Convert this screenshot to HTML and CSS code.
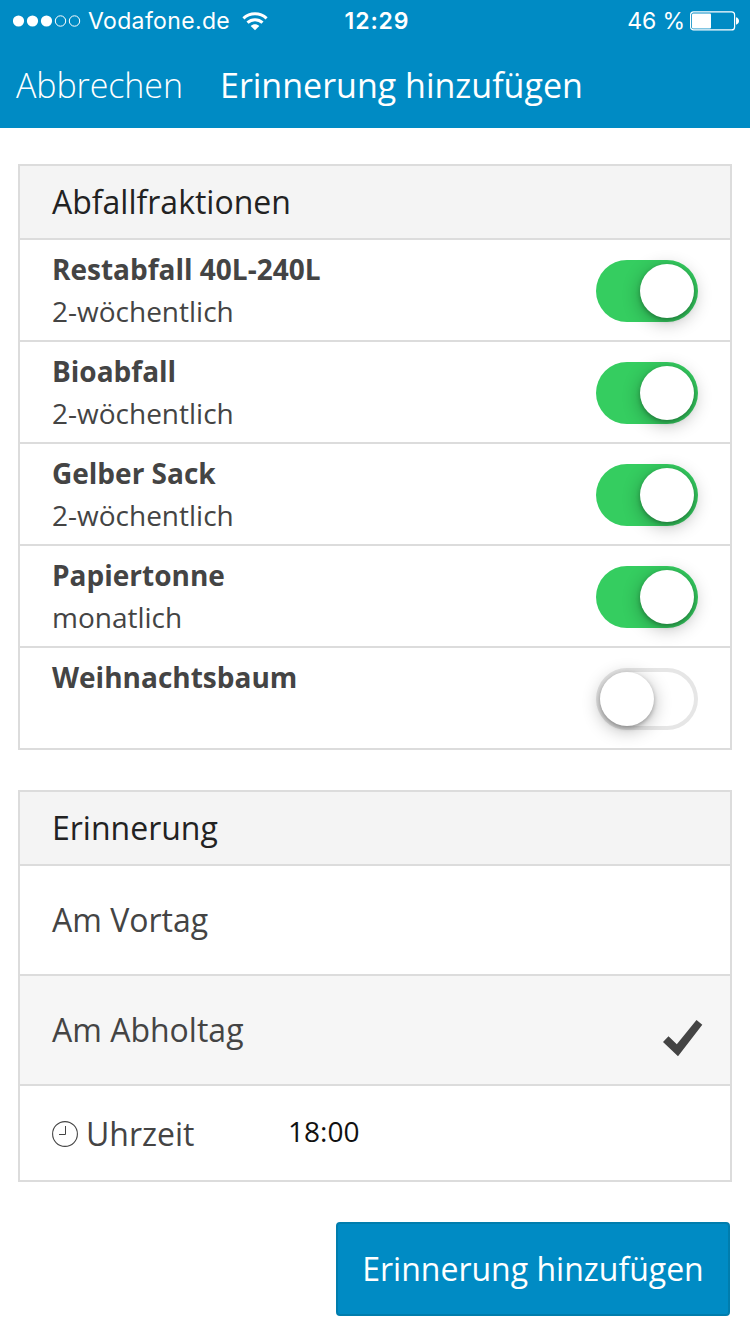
FILE: index.html
```html
<!DOCTYPE html>
<html lang="de">
<head>
  <meta charset="UTF-8">
  <meta name="viewport" content="width=device-width, initial-scale=1.0">
  <title>Erinnerung hinzufügen</title>
  <link rel="stylesheet" href="styles.css">
</head>
<body>
  <header>
    <div class="status-bar">
      <div class="status-left">
        <svg class="signal" width="68" height="12" viewBox="0 0 68 12">
          <g fill="#fff">
            <circle cx="5.5" cy="6" r="5.6"/>
            <circle cx="19.5" cy="6" r="5.6"/>
            <circle cx="33.5" cy="6" r="5.6"/>
          </g>
          <g fill="none" stroke="#fff">
            <circle cx="47.5" cy="6" r="5.2"/>
            <circle cx="61.5" cy="6" r="5.2"/>
          </g>
        </svg>
        <span class="carrier">Vodafone.de</span>
        <svg class="wifi" width="26" height="19" viewBox="0 0 26 19">
          <g fill="none" stroke="#fff" stroke-width="3">
            <path d="M1.4 6.3C8 .3 18 .3 24.6 6.3"/>
            <path d="M5.5 10.7C9.7 6.7 16.3 6.7 20.5 10.7"/>
          </g>
          <path fill="#fff" d="M8.7 14C11.2 11.7 14.8 11.7 17.3 14L13 18.3Z"/>
        </svg>
      </div>
      <div class="status-time">12:29</div>
      <div class="status-right">
        <span class="percent">46 %</span>
        <svg width="50" height="20" viewBox="0 0 50 20">
          <rect x="0.6" y="0.9" width="44" height="18" rx="3" fill="none" stroke="#fff" stroke-width="1.2"/>
          <rect x="2" y="2.5" width="19" height="15" rx="1" fill="#fff"/>
          <path fill="#fff" d="M46 6.3C50 7.3 50 12.7 46 13.7Z"/>
        </svg>
      </div>
    </div>
    <div class="nav-bar">
      <a href="#" class="cancel">Abbrechen</a>
      <h1>Erinnerung hinzufügen</h1>
    </div>
  </header>

  <main>
    <!-- Waste types -->
    <section class="card">
      <h2>Abfallfraktionen</h2>
      <div class="row fraction">
        <div>
          <div class="name">Restabfall 40L-240L</div>
          <div class="interval">2-wöchentlich</div>
        </div>
        <div class="toggle on"></div>
      </div>
      <div class="row fraction">
        <div>
          <div class="name">Bioabfall</div>
          <div class="interval">2-wöchentlich</div>
        </div>
        <div class="toggle on"></div>
      </div>
      <div class="row fraction">
        <div>
          <div class="name">Gelber Sack</div>
          <div class="interval">2-wöchentlich</div>
        </div>
        <div class="toggle on"></div>
      </div>
      <div class="row fraction">
        <div>
          <div class="name">Papiertonne</div>
          <div class="interval">monatlich</div>
        </div>
        <div class="toggle on"></div>
      </div>
      <div class="row fraction">
        <div>
          <div class="name">Weihnachtsbaum</div>
        </div>
        <div class="toggle"></div>
      </div>
    </section>

    <!-- Reminder day and time -->
    <section class="card">
      <h2>Erinnerung</h2>
      <div class="row day">Am Vortag</div>
      <div class="row day selected">
        Am Abholtag
        <svg class="check" width="40" height="37" viewBox="0 0 40 37">
          <path fill="#444" d="M0 22L5.5 16.3L13.8 24.2L33.5 0L39.3 4.7L15 36.2Z"/>
        </svg>
      </div>
      <div class="row time">
        <svg class="clock" width="26" height="26" viewBox="0 0 26 26">
          <g fill="none" stroke="#444">
            <circle cx="13" cy="13" r="12.4" stroke-width="1.1"/>
            <path d="M13.5 5V13.5H7"/>
          </g>
        </svg>
        <span class="time-label">Uhrzeit</span>
        <span class="time-value">18:00</span>
      </div>
    </section>

    <button class="submit">Erinnerung hinzufügen</button>
  </main>
</body>
</html>
```
FILE: styles.css
```css
* {
  box-sizing: border-box;
}
body {
  margin: 0;
  background-color: #fff;
  color: #444;
  font-family: "Open Sans", sans-serif;
  font-size: 32px;
}
header {
  height: 128px;
  background-color: #008bc4;
  color: #fff;
}

/* Status bar */
.status-bar {
  display: grid;
  grid-template-columns: 1fr auto 1fr;
  height: 40px;
  padding: 0 10px 0 13px;
  font-family: Inter, sans-serif;
  font-size: 23px;
  line-height: 42px;
}
.status-left, .status-right {
  display: flex;
  align-items: center;
}
.status-right {
  justify-content: flex-end;
  gap: 5px;
}
.carrier {
  margin: 0 12px 0 7px;
  letter-spacing: 0.35px;
}
.status-time {
  padding-left: 1px;
  font-weight: 600;
  letter-spacing: 0.9px;
}
.percent {
  letter-spacing: -0.1px;
}

/* Navigation bar */
.nav-bar {
  display: flex;
  height: 88px;
  padding: 0 16px;
  line-height: 90px;
  font-size: 34px;
}
.cancel {
  width: 204px;
  color: #fff;
  font-weight: 300;
  letter-spacing: -0.1px;
  text-decoration: none;
}
h1 {
  margin: 0;
  font-size: 34px;
  font-weight: 400;
}

main {
  display: flex;
  flex-direction: column;
  padding: 36px 18px 0;
}
.card {
  margin-bottom: 40px;
  border: 2px solid #dcdcdc;
}
h2 {
  height: 72px;
  margin: 0;
  padding: 0 32px;
  background-color: #f4f4f4;
  color: #222;
  font-size: 32px;
  font-weight: 400;
  line-height: 72px;
}
.row {
  display: flex;
  justify-content: space-between;
  padding: 0 32px;
  border-top: 2px solid #dcdcdc;
}
.fraction {
  height: 102px;
  padding-top: 8px;
  font-size: 28px;
  line-height: 42px;
}
.name {
  font-weight: 700;
}

/* iOS style switch */
.toggle {
  width: 102px;
  height: 62px;
  margin-top: 12px;
  padding: 4px;
  border-radius: 31px;
  box-shadow: inset 0 0 0 4px #e6e6e6;
}
.toggle::before {
  content: "";
  display: block;
  width: 54px;
  height: 54px;
  border-radius: 50%;
  background-color: #fff;
  box-shadow: 0 4px 18px rgba(0, 0, 0, 0.3), 0 2px 4px rgba(0, 0, 0, 0.25);
}
.toggle.on {
  background-color: #35cd60;
  box-shadow: none;
}
.toggle.on::before {
  margin-left: 40px;
}

.day {
  height: 110px;
  line-height: 108px;
}
.selected {
  padding-right: 27px;
  background-color: #f6f6f6;
}
.check {
  margin-top: 44px;
}
.time {
  height: 96px;
  justify-content: flex-start;
  line-height: 96px;
}
.clock {
  margin: 35px 8px 0 0;
}
.time-label {
  width: 202px;
}
.time-value {
  color: #111;
  font-size: 28px;
  line-height: 90px;
}

.submit {
  align-self: flex-end;
  width: 394px;
  height: 94px;
  margin-right: 2px;
  padding: 0;
  border: 2px solid #007dad;
  border-radius: 4px;
  background-color: #008bc4;
  color: #fff;
  font-family: inherit;
  font-size: 32px;
  line-height: 90px;
}
```
